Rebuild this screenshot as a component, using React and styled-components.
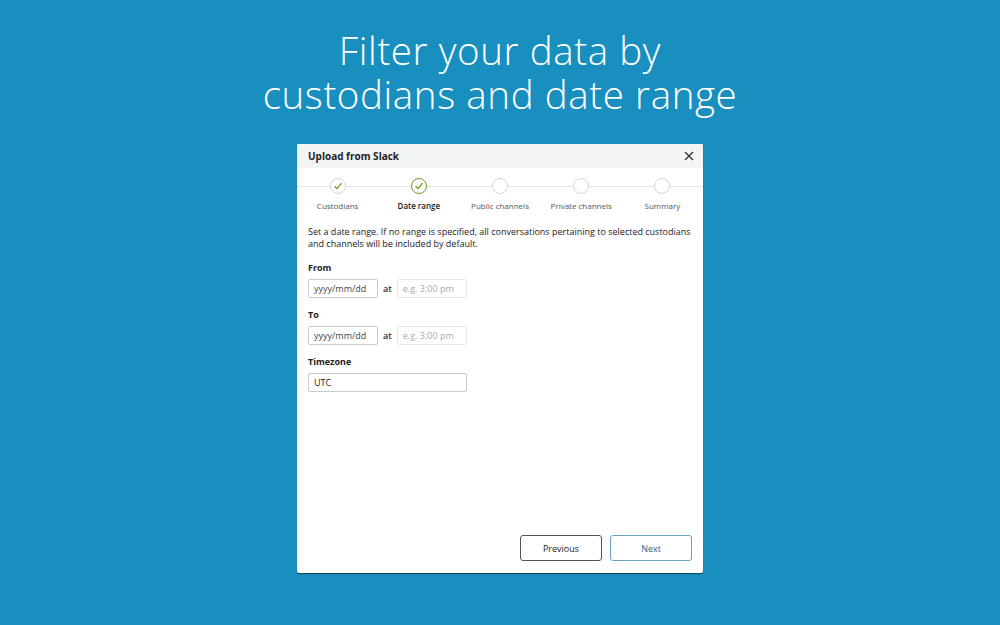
import styled, { createGlobalStyle } from "styled-components";

const GlobalStyle = createGlobalStyle`
  html, body {
    margin: 0;
    padding: 0;
    background: #198fbf;
  }
  * { box-sizing: border-box; }
`;

const steps = [
  { label: "Custodians", state: "done" },
  { label: "Date range", state: "active" },
  { label: "Public channels", state: "todo" },
  { label: "Private channels", state: "todo" },
  { label: "Summary", state: "todo" },
];

const Check = ({ color }) => (
  <svg width="10" height="10" viewBox="0 0 10 10">
    <path d="M1.6 5.2 L4 7.6 L8.6 2.2" fill="none" stroke={color} strokeWidth="1.3" />
  </svg>
);

const App = () => {
  return (
    <Page>
      <GlobalStyle />
      <Title>
        <TitleLine>Filter your data by</TitleLine>
        <TitleLine>custodians and date range</TitleLine>
      </Title>
      <Dialog>
        <Header>
          <HeaderTitle>Upload from Slack</HeaderTitle>
          <Close>
            <svg width="10" height="10" viewBox="0 0 10 10">
              <path d="M1 1 L9 9 M9 1 L1 9" stroke="#333" strokeWidth="1.4" />
            </svg>
          </Close>
        </Header>
        <Stepper>
          {steps.map((s) => (
            <Step key={s.label}>
              <Circle state={s.state}>
                {s.state !== "todo" && <Check color="#6a9f22" />}
              </Circle>
              <StepLabel active={s.state === "active"}>{s.label}</StepLabel>
            </Step>
          ))}
        </Stepper>
        <Body>
          <Intro>
            Set a date range. If no range is specified, all conversations pertaining to selected custodians
            and channels will be included by default.
          </Intro>
          <FieldLabel>From</FieldLabel>
          <Row>
            <DateInput placeholder="yyyy/mm/dd" />
            <At>at</At>
            <TimeInput placeholder="e.g. 3:00 pm" />
          </Row>
          <FieldLabel>To</FieldLabel>
          <Row>
            <DateInput placeholder="yyyy/mm/dd" />
            <At>at</At>
            <TimeInput placeholder="e.g. 3:00 pm" />
          </Row>
          <FieldLabel>Timezone</FieldLabel>
          <Row>
            <ZoneInput defaultValue="UTC" />
          </Row>
        </Body>
        <Footer>
          <Button>Previous</Button>
          <Button primary>Next</Button>
        </Footer>
      </Dialog>
    </Page>
  );
};

const Page = styled.div`
  width: 1000px;
  height: 625px;
  display: flex;
  flex-direction: column;
  align-items: center;
  padding-top: 28px;
  font-family: "Open Sans", sans-serif;
  overflow: hidden;
`;

const Title = styled.h1`
  margin: 0;
  font-family: "Open Sans", sans-serif;
  font-weight: 300;
  font-size: 38.5px;
  color: #ffffff;
  text-align: center;
  letter-spacing: 0.6px;
`;

const TitleLine = styled.div`
  height: 44px;
  line-height: 44px;
`;

const Dialog = styled.div`
  margin-top: 28px;
  width: 406px;
  height: 429px;
  background: #ffffff;
  border-radius: 2px;
  box-shadow: 0 1px 1px rgba(0, 0, 0, 0.55);
  display: flex;
  flex-direction: column;
`;

const Header = styled.div`
  height: 24px;
  background: #f3f5f5;
  display: flex;
  align-items: center;
  justify-content: space-between;
  padding: 0 9px 0 11px;
  border-radius: 2px 2px 0 0;
`;

const HeaderTitle = styled.div`
  font-size: 10px;
  font-weight: 700;
  color: #222;
`;

const Close = styled.div`
  display: flex;
  align-items: center;
`;

const Stepper = styled.div`
  display: flex;
  position: relative;
  padding-top: 10px;
  &::before {
    content: "";
    position: absolute;
    left: 0;
    right: 0;
    top: 18px;
    height: 1px;
    background: #e2e4e4;
  }
`;

const Step = styled.div`
  flex: 1;
  display: flex;
  flex-direction: column;
  align-items: center;
  position: relative;
`;

const Circle = styled.div`
  width: 16px;
  height: 16px;
  border-radius: 50%;
  background: #fff;
  border: 1px solid ${(p) => (p.state === "active" ? "#6a9f22" : "#d3d6d6")};
  display: flex;
  align-items: center;
  justify-content: center;
`;

const StepLabel = styled.div`
  margin-top: 6px;
  font-size: 8px;
  line-height: 11px;
  color: ${(p) => (p.active ? "#222" : "#555")};
  font-weight: ${(p) => (p.active ? 600 : 400)};
`;

const Body = styled.div`
  flex: 1;
  padding: 15px 11px 0 11px;
`;

const Intro = styled.p`
  margin: 0 0 12px 0;
  font-size: 9px;
  line-height: 12px;
  color: #222;
`;

const FieldLabel = styled.div`
  font-size: 9px;
  font-weight: 700;
  color: #222;
  line-height: 12px;
  margin-bottom: 5px;
`;

const Row = styled.div`
  display: flex;
  align-items: center;
  margin-bottom: 11px;
`;

const inputBase = `
  height: 19px;
  border-radius: 2px;
  font-family: "Open Sans", sans-serif;
  font-size: 9px;
  padding: 0 5px;
  outline: none;
  color: #222;
`;

const DateInput = styled.input`
  ${inputBase}
  width: 70px;
  border: 1px solid #c9cccc;
  &::placeholder { color: #444; }
`;

const TimeInput = styled.input`
  ${inputBase}
  width: 70px;
  border: 1px solid #e6e8e8;
  &::placeholder { color: #aaa; }
`;

const ZoneInput = styled.input`
  ${inputBase}
  width: 159px;
  border: 1px solid #c9cccc;
`;

const At = styled.span`
  font-size: 9px;
  font-weight: 600;
  color: #333;
  margin: 0 5px 0 5px;
`;

const Footer = styled.div`
  display: flex;
  justify-content: flex-end;
  gap: 8px;
  padding: 0 11px 12px 0;
`;

const Button = styled.button`
  width: 82px;
  height: 26px;
  border-radius: 3px;
  background: #fff;
  font-family: "Open Sans", sans-serif;
  font-size: 9px;
  border: 1px solid ${(p) => (p.primary ? "#6aa5c5" : "#555")};
  color: ${(p) => (p.primary ? "#1d5f8a" : "#222")};
`;

export default App;
